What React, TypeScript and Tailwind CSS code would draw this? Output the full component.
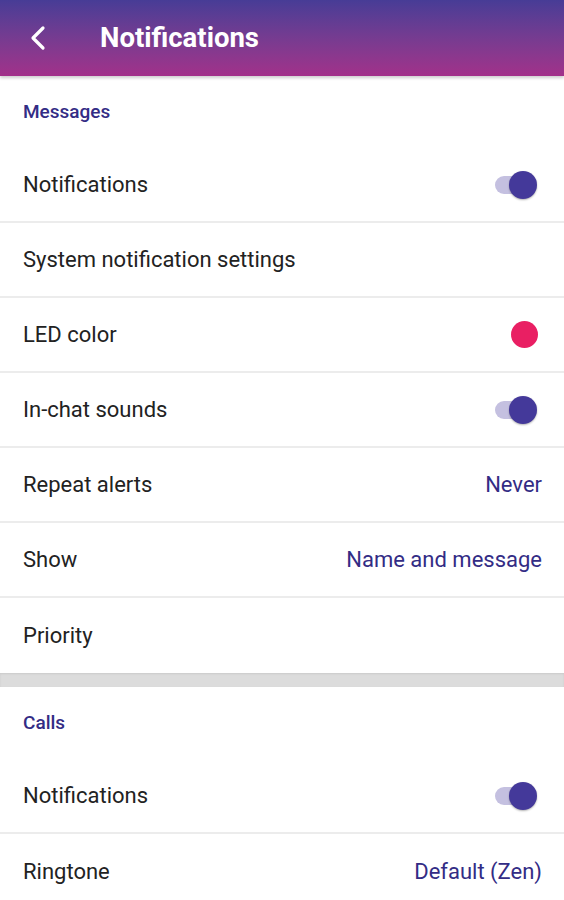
import React from 'react';

type Row = {
  label: string;
  kind?: 'toggle' | 'dot' | 'value';
  value?: string;
};

const messages: Row[] = [
  { label: 'Notifications', kind: 'toggle' },
  { label: 'System notification settings' },
  { label: 'LED color', kind: 'dot' },
  { label: 'In-chat sounds', kind: 'toggle' },
  { label: 'Repeat alerts', kind: 'value', value: 'Never' },
  { label: 'Show', kind: 'value', value: 'Name and message' },
  { label: 'Priority' },
];

const calls: Row[] = [
  { label: 'Notifications', kind: 'toggle' },
  { label: 'Ringtone', kind: 'value', value: 'Default (Zen)' },
];

const Toggle = () => (
  <div className="relative w-[47px] h-[28px] flex items-center">
    <div className="absolute left-0 right-[8px] h-[18px] rounded-full bg-[#c4c0e0]" />
    <div className="absolute right-[5px] w-[28px] h-[28px] rounded-full bg-[#44399a] shadow-[0_1px_2px_rgba(0,0,0,0.3)]" />
  </div>
);

const SettingRow = ({ row, last }: { row: Row; last: boolean }) => (
  <div
    className={`h-[75px] flex items-center justify-between pl-[23px] pr-[22px] ${
      last ? '' : 'border-b-2 border-[#ececec]'
    }`}
  >
    <span className="text-[22px] text-[#222]">{row.label}</span>
    {row.kind === 'toggle' && <Toggle />}
    {row.kind === 'dot' && <div className="w-[27px] h-[27px] rounded-full bg-[#e91f63] mr-[4px]" />}
    {row.kind === 'value' && <span className="text-[22px] text-[#332c85]">{row.value}</span>}
  </div>
);

const Section = ({ title, rows }: { title: string; rows: Row[] }) => (
  <div className="bg-white">
    <div className="h-[72px] flex items-center pl-[23px] text-[19px] font-medium text-[#332c85]">
      {title}
    </div>
    {rows.map((r, i) => (
      <SettingRow key={i} row={r} last={i === rows.length - 1} />
    ))}
  </div>
);

export default function App() {
  return (
    <div className="w-[564px] h-[900px] overflow-hidden bg-white font-['Roboto',sans-serif]">
      <div className="h-[76px] flex items-center bg-gradient-to-b from-[#473c96] to-[#a2308a] shadow-[0_2px_3px_rgba(0,0,0,0.2)] relative z-10">
        <svg className="ml-[28px]" width="22" height="26" viewBox="0 0 22 26" fill="none">
          <path d="M15 3 L5 13 L15 23" stroke="white" strokeWidth="3.2" strokeLinecap="round" strokeLinejoin="round" />
        </svg>
        <span className="ml-[50px] text-[27.5px] font-bold text-white">Notifications</span>
      </div>
      <Section title="Messages" rows={messages} />
      <div className="h-[14px] bg-[#dcdcdc] shadow-[inset_0_1px_2px_rgba(0,0,0,0.08)]" />
      <Section title="Calls" rows={calls} />
    </div>
  );
}
